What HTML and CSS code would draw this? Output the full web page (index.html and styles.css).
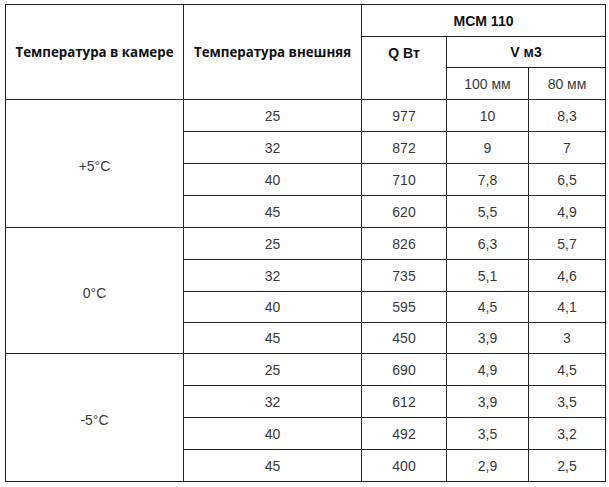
FILE: index.html
```html
<!DOCTYPE html>
<html lang="ru">
<head>
<meta charset="utf-8">
<link rel="stylesheet" href="styles.css">
</head>
<body>
<table class="spec">
  <colgroup>
    <col class="c-wide"><col class="c-wide"><col class="c-q"><col class="c-100"><col class="c-80">
  </colgroup>
  <thead>
    <tr class="h1">
      <th rowspan="3" class="head-main">Температура в камере</th>
      <th rowspan="3" class="head-main">Температура внешняя</th>
      <th colspan="3">MCM 110</th>
    </tr>
    <tr class="h2">
      <th rowspan="2" class="top">Q Вт</th>
      <th colspan="2">V м3</th>
    </tr>
    <tr class="h3">
      <td>100 мм</td>
      <td>80 мм</td>
    </tr>
  </thead>
  <tbody>
    <tr><td rowspan="4" class="group">+5°C</td><td>25</td><td>977</td><td>10</td><td>8,3</td></tr>
    <tr><td>32</td><td>872</td><td>9</td><td>7</td></tr>
    <tr><td>40</td><td>710</td><td>7,8</td><td>6,5</td></tr>
    <tr><td>45</td><td>620</td><td>5,5</td><td>4,9</td></tr>
    <tr><td rowspan="4" class="group">0°C</td><td>25</td><td>826</td><td>6,3</td><td>5,7</td></tr>
    <tr><td>32</td><td>735</td><td>5,1</td><td>4,6</td></tr>
    <tr class="short"><td>40</td><td>595</td><td>4,5</td><td>4,1</td></tr>
    <tr class="short"><td>45</td><td>450</td><td>3,9</td><td>3</td></tr>
    <tr><td rowspan="4" class="group">-5°C</td><td>25</td><td>690</td><td>4,9</td><td>4,5</td></tr>
    <tr><td>32</td><td>612</td><td>3,9</td><td>3,5</td></tr>
    <tr><td>40</td><td>492</td><td>3,5</td><td>3,2</td></tr>
    <tr><td>45</td><td>400</td><td>2,9</td><td>2,5</td></tr>
  </tbody>
</table>
</body>
</html>
```
FILE: styles.css
```css
html, body {
  margin: 0;
  padding: 0;
  background: #fff;
}
body {
  padding: 4px 0 0 5px;
  font-family: "Liberation Sans", Arial, sans-serif;
  font-size: 14px;
  color: #3a3a3a;
}
.spec {
  border-collapse: collapse;
  table-layout: fixed;
  width: 601px;
}
.c-wide { width: 178px; }
.c-q { width: 85px; }
.c-100 { width: 82px; }
.c-80 { width: 77px; }
.spec th, .spec td {
  border: 1px solid #222;
  text-align: center;
  vertical-align: middle;
  padding: 0;
  height: 31px;
  line-height: 16px;
}
.spec tr.short td {
  height: 30px;
}
.spec tr.h2 th {
  height: 30px;
}
.spec th {
  font-weight: bold;
  color: #111;
}
.spec th.head-main {
  font-family: "Open Sans", "Noto Sans", sans-serif;
  font-size: 13.3px;
  font-weight: 700;
  color: #111;
}
.spec th.top {
  vertical-align: top;
  padding-top: 8px;
  height: auto;
}
.spec td.group {
  padding-top: 4px;
}
```
